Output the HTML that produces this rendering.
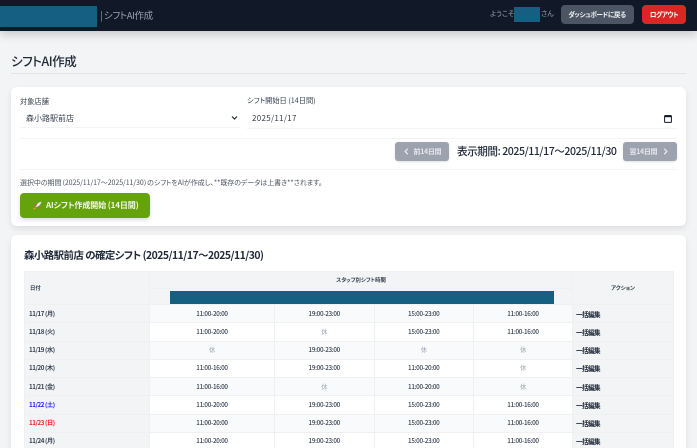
<!DOCTYPE html>
<html lang="ja">
<head>
<meta charset="utf-8">
<title>シフトAI作成</title>
<style>
*{box-sizing:border-box;margin:0;padding:0}
html,body{width:697px;height:448px;overflow:hidden;background:#f3f4f6}
body{font-family:"Noto Sans CJK JP","Liberation Sans",sans-serif;font-feature-settings:"palt";color:#1f2937;position:relative}
#w{position:absolute;left:0;top:0;width:697px;height:448px;overflow:hidden;filter:blur(.35px)}
.a{position:absolute;white-space:nowrap}
.c{text-align:center}
table{position:absolute;left:24px;top:271px;width:649px;border-collapse:collapse;table-layout:fixed}
td,th{border:1px solid #eef0f2;padding:0;font-size:6.3px;line-height:10px;letter-spacing:-.3px;text-align:center;overflow:hidden;white-space:nowrap}
th{background:#f3f4f6;font-weight:700;font-size:5.4px;letter-spacing:0;color:#374151}
tbody tr{height:18.25px}
tbody td{color:#374151;font-weight:500}
tbody tr:nth-child(odd) td{background:#f9fafb}
td.d,tbody tr:nth-child(odd) td.d{background:#f3f4f6;text-align:left;padding-left:4px;font-weight:700;font-size:6.2px;letter-spacing:-.4px;color:#374151}
td.e,tbody tr:nth-child(odd) td.e{background:#f3f4f6;text-align:left;padding-left:3px;font-weight:700;font-size:6.6px;letter-spacing:-.6px;color:#1f2937}
td.o{color:#9ca3af;font-weight:400}
</style>
</head>
<body>
<div id="w">
  <!-- top bar -->
  <div class="a" style="left:0;top:0;width:697px;height:31px;background:#111827;box-shadow:0 3px 10px rgba(0,0,0,.2)"></div>
  <div class="a" style="left:0;top:6px;width:97px;height:21px;background:#156082"></div>
  <div class="a" style="left:100px;top:7.5px;font-size:9.5px;line-height:14px;letter-spacing:-.4px;color:#9ca3af">| シフトAI作成</div>
  <div class="a" style="left:490px;top:9px;font-size:7px;line-height:11px;color:#9ca3af">ようこそ、</div>
  <div class="a" style="left:514px;top:7px;width:26px;height:15px;background:#156082"></div>
  <div class="a" style="left:541px;top:9px;font-size:7px;line-height:11px;color:#9ca3af">さん</div>
  <div class="a c" style="left:560.5px;top:4.5px;width:73px;height:19px;border-radius:4px;background:#4b5563;color:#f3f4f6;font-size:6.6px;letter-spacing:-.4px;font-weight:700;line-height:19px">ダッシュボードに戻る</div>
  <div class="a c" style="left:642px;top:4.5px;width:44px;height:19px;border-radius:4px;background:#dc2626;color:#fff;font-size:6.6px;letter-spacing:-.5px;font-weight:700;line-height:19px">ログアウト</div>

  <!-- page title -->
  <div class="a" style="left:11px;top:51.5px;font-size:12.6px;line-height:18px;letter-spacing:-.5px;font-weight:500;color:#1f2937">シフトAI作成</div>
  <div class="a" style="left:11px;top:73px;width:675px;height:1px;background:#e2e4e8"></div>

  <!-- card 1 -->
  <div class="a" style="left:11px;top:87px;width:675px;height:139px;background:#fff;border-radius:6px;box-shadow:0 3px 7px rgba(0,0,0,.09)"></div>
  <div class="a" style="left:20px;top:97px;font-size:7.2px;line-height:10px;color:#374151">対象店舗</div>
  <div class="a" style="left:247px;top:96px;font-size:7.2px;line-height:10px;color:#374151">シフト開始日 (14日間)</div>
  <div class="a" style="left:20px;top:108px;width:220px;height:20px;border-bottom:1px solid #f3f4f6"></div>
  <div class="a" style="left:26px;top:113px;font-size:8px;line-height:11px;color:#374151">森小路駅前店</div>
  <svg class="a" style="left:231px;top:115px" width="7" height="6" viewBox="0 0 7 6"><path d="M1 1.5L3.5 4L6 1.5" fill="none" stroke="#1f2937" stroke-width="1.2"/></svg>
  <div class="a" style="left:247px;top:108px;width:430px;height:21px;border-bottom:1px solid #f3f4f6"></div>
  <div class="a" style="left:252px;top:113px;font-size:8px;line-height:11px;letter-spacing:.3px;color:#374151">2025/11/17</div>
  <svg class="a" style="left:664px;top:114px" width="8" height="9" viewBox="0 0 8 9"><rect x=".6" y="1.6" width="6.8" height="6.8" rx=".8" fill="#fff" stroke="#111827" stroke-width="1"/><rect x=".6" y="1.2" width="6.8" height="2" fill="#111827"/></svg>
  <div class="a" style="left:20px;top:138px;width:657px;height:1px;background:#f3f4f6"></div>
  <div class="a" style="left:20px;top:169px;width:657px;height:1px;background:#f3f4f6"></div>

  <div class="a" style="left:394.5px;top:142px;width:54px;height:19px;border-radius:3px;background:#9ca3af;box-shadow:0 1px 2px rgba(0,0,0,.12)"></div>
  <svg class="a" style="left:404px;top:148px" width="5" height="7" viewBox="0 0 5 7"><path d="M3.8 .8L1.2 3.5L3.8 6.2" fill="none" stroke="#f3f4f6" stroke-width="1.1"/></svg>
  <div class="a" style="left:413.5px;top:147px;font-size:7px;line-height:10px;letter-spacing:-.3px;font-weight:700;color:#e5e7eb">前14日間</div>
  <div class="a" style="left:457px;top:145px;font-size:10.6px;line-height:14px;letter-spacing:-.45px;font-weight:500;color:#1f2937">表示期間: 2025/11/17～2025/11/30</div>
  <div class="a" style="left:623px;top:142px;width:54px;height:19px;border-radius:3px;background:#9ca3af;box-shadow:0 1px 2px rgba(0,0,0,.12)"></div>
  <div class="a" style="left:629.5px;top:147px;font-size:7px;line-height:10px;letter-spacing:-.3px;font-weight:700;color:#e5e7eb">翌14日間</div>
  <svg class="a" style="left:663px;top:148px" width="5" height="7" viewBox="0 0 5 7"><path d="M1.2 .8L3.8 3.5L1.2 6.2" fill="none" stroke="#f3f4f6" stroke-width="1.1"/></svg>

  <div class="a" style="left:20px;top:178px;font-size:7px;line-height:10px;letter-spacing:-.06px;color:#4b5563">選択中の期間（2025/11/17～2025/11/30）のシフトをAIが作成し、**既存のデータは上書き**されます。</div>
  <div class="a" style="left:19.5px;top:192.5px;width:130.5px;height:25.5px;border-radius:4px;background:#65a30d;box-shadow:0 2px 4px rgba(0,0,0,.14)"></div>
  <svg class="a" style="left:33px;top:201px" width="9" height="9" viewBox="0 0 9 9"><path d="M2.5 6.5L4 3.2C5 1.8 6.5 1 8.4.6C8 2.5 7.2 4 5.8 5L2.5 6.5Z" fill="#e9e3ee"/><path d="M4 3.2L2 3.4L1 5L2.8 4.9ZM5.8 5L5.6 7L4 8L4.1 6.2Z" fill="#d9467a"/><path d="M2.2 6.8L.8 8.2" stroke="#f4a340" stroke-width="1.2"/></svg>
  <div class="a" style="left:46px;top:199.5px;font-size:8px;line-height:11px;letter-spacing:-.1px;font-weight:700;color:#f4f8ea">AIシフト作成開始 (14日間)</div>

  <!-- card 2 -->
  <div class="a" style="left:11px;top:235px;width:675px;height:230px;background:#fff;border-radius:6px;box-shadow:0 3px 7px rgba(0,0,0,.09)"></div>
  <div class="a" style="left:24px;top:248px;font-size:10.4px;line-height:14px;letter-spacing:-.5px;font-weight:700;color:#1f2937">森小路駅前店 の確定シフト (2025/11/17～2025/11/30)</div>

  <table>
    <colgroup><col style="width:125px"><col style="width:125px"><col style="width:99.5px"><col style="width:99.5px"><col style="width:99px"><col style="width:101px"></colgroup>
    <thead>
      <tr style="height:16.5px"><th rowspan="2" style="text-align:left;padding-left:5px">日付</th><th colspan="4">スタッフ別シフト時間</th><th rowspan="2">アクション</th></tr>
      <tr style="height:16.5px"><th></th><th></th><th></th><th></th></tr>
    </thead>
    <tbody>
      <tr><td class="d">11/17 (月)</td><td>11:00-20:00</td><td>19:00-23:00</td><td>15:00-23:00</td><td>11:00-16:00</td><td class="e">一括編集</td></tr>
      <tr><td class="d">11/18 (火)</td><td>11:00-20:00</td><td class="o">休</td><td>15:00-23:00</td><td>11:00-16:00</td><td class="e">一括編集</td></tr>
      <tr><td class="d">11/19 (水)</td><td class="o">休</td><td>19:00-23:00</td><td class="o">休</td><td class="o">休</td><td class="e">一括編集</td></tr>
      <tr><td class="d">11/20 (木)</td><td>11:00-16:00</td><td>19:00-23:00</td><td>11:00-20:00</td><td class="o">休</td><td class="e">一括編集</td></tr>
      <tr><td class="d">11/21 (金)</td><td>11:00-16:00</td><td class="o">休</td><td>11:00-20:00</td><td class="o">休</td><td class="e">一括編集</td></tr>
      <tr><td class="d" style="color:#2222ee">11/22 (土)</td><td>11:00-20:00</td><td>19:00-23:00</td><td>15:00-23:00</td><td>11:00-16:00</td><td class="e">一括編集</td></tr>
      <tr><td class="d" style="color:#ee2222">11/23 (日)</td><td>11:00-20:00</td><td>19:00-23:00</td><td>15:00-23:00</td><td>11:00-16:00</td><td class="e">一括編集</td></tr>
      <tr><td class="d">11/24 (月)</td><td>11:00-20:00</td><td>19:00-23:00</td><td>15:00-23:00</td><td>11:00-16:00</td><td class="e">一括編集</td></tr>
    </tbody>
  </table>
  <div class="a" style="left:170px;top:291px;width:384px;height:12.5px;background:#156082"></div>
</div>
</body>
</html>
